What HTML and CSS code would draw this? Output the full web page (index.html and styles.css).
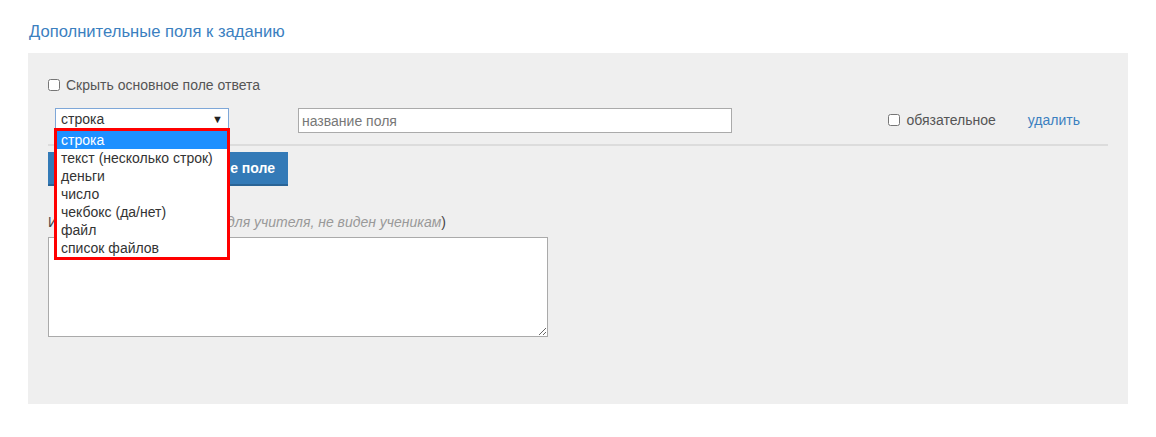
FILE: index.html
```html
<!DOCTYPE html>
<html lang="ru">
<head>
    <meta charset="UTF-8">
    <title>Дополнительные поля к заданию</title>
    <link rel="stylesheet" href="styles.css">
</head>
<body>
    <div class="page">
        <h3 class="title">Дополнительные поля к заданию</h3>
        <div class="panel">
            <label class="check-row">
                <input type="checkbox"> Скрыть основное поле ответа
            </label>

            <div class="field-row">
                <div class="fake-select">
                    <div class="fake-select-value">
                        <span>строка</span>
                        <span class="arrow">&#9660;</span>
                    </div>
                    <!-- открытый список типов -->
                    <ul class="options">
                        <li class="active">строка</li>
                        <li>текст (несколько строк)</li>
                        <li>деньги</li>
                        <li>число</li>
                        <li>чекбокс (да/нет)</li>
                        <li>файл</li>
                        <li>список файлов</li>
                    </ul>
                </div>
                <input type="text" class="field-name" placeholder="название поля">
                <label class="required">
                    <input type="checkbox"> обязательное
                </label>
                <a href="#" class="remove-link">удалить</a>
            </div>

            <button class="add-btn">Добавить новое поле</button>

            <div class="note-label">
                Инструкция&nbsp;&nbsp; <em>(информация для учителя, не виден ученикам</em>)
            </div>
            <textarea class="note"></textarea>
        </div>
    </div>
</body>
</html>
```

FILE: styles.css
```css
body {
    margin: 0;
    font-family: "Liberation Sans", Arial, sans-serif;
    font-size: 14px;
    color: #444;
    background-color: #fff;
}

.page {
    padding: 22px 28px 34px 28px;
}

.title {
    margin: 0 0 11px 1px;
    font-size: 16.6px;
    font-weight: normal;
    line-height: 20px;
    color: #3b80bf; /* синий заголовок */
}

.panel {
    background-color: #efefef;
    padding: 24px 20px 67px 20px;
}

.check-row {
    display: flex;
    align-items: center;
    gap: 6px;
    color: #555;
    line-height: 16px;
}

    .check-row input, .required input {
        margin: 0;
        width: 12px;
        height: 12px;
    }

.field-row {
    display: flex;
    align-items: flex-start;
    margin-top: 15px;
    padding: 0 28px 11px 7px;
    border-bottom: 2px solid #dcdcdc;
}

.fake-select {
    position: relative;
    width: 174px;
}

.fake-select-value {
    display: flex;
    justify-content: space-between;
    align-items: center;
    height: 20px;
    padding: 0 5px;
    background-color: #fff;
    border: 1px solid #7ea7d8;
    color: #333;
}

    .fake-select-value .arrow {
        font-size: 11px;
        color: #222;
    }

.options {
    position: absolute;
    top: 20px;
    left: -1px;
    width: 170px;
    margin: 0;
    padding: 0;
    list-style: none;
    background-color: #fff;
    border: 3px solid #ff0000; /* красная рамка выделения */
    z-index: 2;
}

    .options li {
        height: 18px;
        line-height: 18px;
        padding: 0 4px;
        color: #333;
    }

        .options li.active {
            background-color: #1e90ff;
            color: #fff;
        }

.field-name {
    width: 434px;
    height: 25px;
    margin-left: 69px;
    padding: 0 3px;
    box-sizing: border-box;
    border: 1px solid #aaa;
    font-family: inherit;
    font-size: 14px;
}

    .field-name::placeholder {
        color: #777;
    }

.required {
    display: flex;
    align-items: center;
    gap: 6px;
    margin-left: auto;
    margin-top: 4px;
    line-height: 16px;
    color: #555;
}

.remove-link {
    margin-left: 32px;
    margin-top: 4px;
    line-height: 16px;
    color: #3b7fbf;
    text-decoration: none;
}

.add-btn {
    display: block;
    width: 240px;
    height: 34px;
    margin-top: 6px;
    padding: 0 13px 0 0;
    text-align: right;
    white-space: nowrap;
    overflow: hidden;
    background-color: #337ab7;
    border: none;
    border-bottom: 2px solid #2a6496;
    color: #fff;
    font-family: inherit;
    font-size: 14px;
    font-weight: bold;
}

.note-label {
    margin-top: 27px;
    line-height: 18px;
    color: #444;
}

    .note-label em {
        color: #999;
    }

.note {
    display: block;
    width: 500px;
    height: 100px;
    margin-top: 6px;
    box-sizing: border-box;
    border: 1px solid #aaa;
    background-color: #fff;
}
```
